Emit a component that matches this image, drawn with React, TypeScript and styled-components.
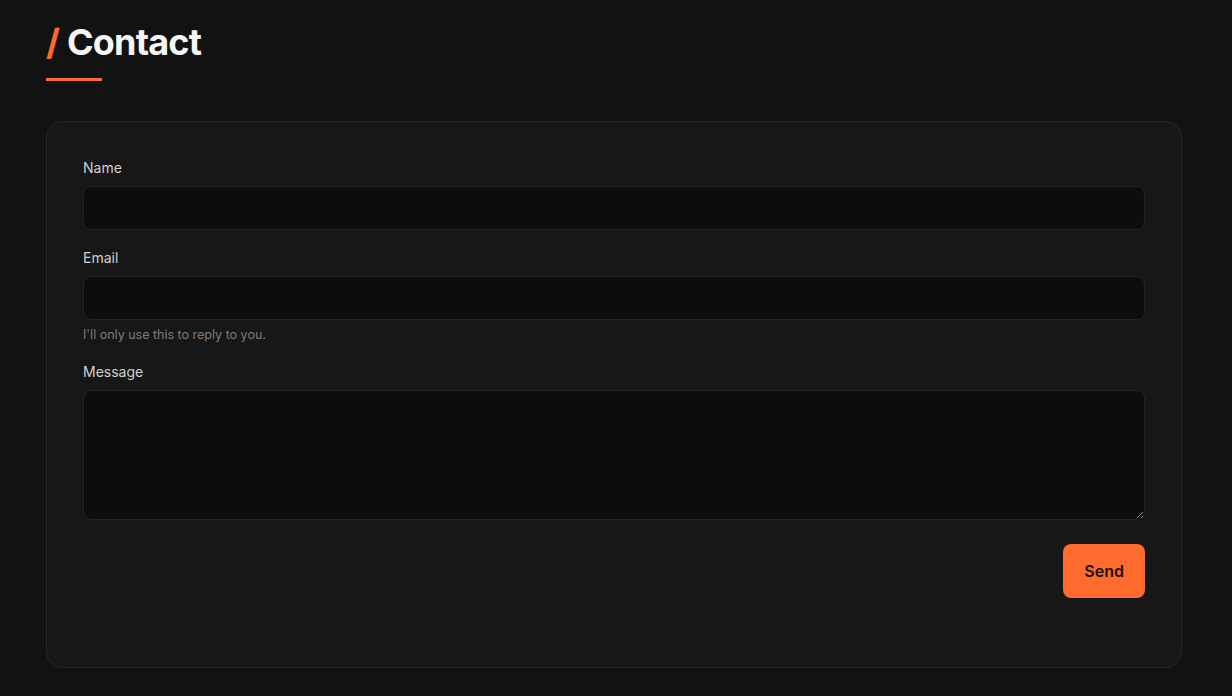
import styled, { createGlobalStyle } from 'styled-components'

const GlobalStyle = createGlobalStyle`
    * {
        box-sizing: border-box;
    }
    body {
        margin: 0;
        background-color: #121212;
        font-family: Inter, "Noto Sans", sans-serif;
        color: #f5f5f5;
    }
`

const Pagina = styled.section`
    min-height: 696px;
    padding: 20px 0 28px 46px;
`

const Titulo = styled.h2`
    margin: 0;
    font-size: 36px;
    line-height: 44px;
    font-weight: 700;
    letter-spacing: -0.8px;
    color: #f5f5f5;
`

const Barra = styled.span`
    color: #ff6b2c;
`

const Subrayado = styled.div`
    width: 56px;
    height: 3px;
    margin-top: 14px;
    background-color: #ff6b2c;
`

const Tarjeta = styled.form`
    width: 1136px;
    margin-top: 40px;
    padding: 36px 36px 69px;
    background-color: #171717;
    border: 1px solid #262626;
    border-radius: 16px;
    display: flex;
    flex-direction: column;
    gap: 18px;
`

const Campo = styled.div`
    display: flex;
    flex-direction: column;
`

const Etiqueta = styled.label`
    font-size: 14px;
    line-height: 20px;
    font-weight: 400;
    color: #d0d0d0;
    margin-bottom: 8px;
`

const Entrada = styled.input`
    height: 44px;
    width: 100%;
    padding: 0 14px;
    background-color: #0d0d0d;
    border: 1px solid #242424;
    border-radius: 8px;
    color: #f5f5f5;
    font-family: inherit;
    font-size: 15px;
    outline: none;
`

const AreaTexto = styled.textarea`
    height: 130px;
    width: 100%;
    padding: 12px 14px;
    background-color: #0d0d0d;
    border: 1px solid #242424;
    border-radius: 8px;
    color: #f5f5f5;
    font-family: inherit;
    font-size: 15px;
    resize: vertical;
    outline: none;
    display: block;
`

const Ayuda = styled.p`
    margin: 6px 0 0;
    font-size: 12.5px;
    line-height: 18px;
    color: #7c7c7c;
`

const Acciones = styled.div`
    display: flex;
    justify-content: flex-end;
    margin-top: 6px;
`

const Boton = styled.button`
    height: 54px;
    padding: 0 21px;
    background-color: #ff6b2c;
    color: #141414;
    border: none;
    border-radius: 8px;
    font-family: inherit;
    font-size: 16px;
    font-weight: 600;
    cursor: pointer;
`

function App() {
    return (
        <>
            <GlobalStyle />
            <Pagina>
                <Titulo><Barra>/</Barra> Contact</Titulo>
                <Subrayado />
                <Tarjeta onSubmit={(e) => e.preventDefault()}>
                    <Campo>
                        <Etiqueta htmlFor="name">Name</Etiqueta>
                        <Entrada id="name" type="text" />
                    </Campo>
                    <Campo>
                        <Etiqueta htmlFor="email">Email</Etiqueta>
                        <Entrada id="email" type="email" />
                        <Ayuda>I'll only use this to reply to you.</Ayuda>
                    </Campo>
                    <Campo>
                        <Etiqueta htmlFor="message">Message</Etiqueta>
                        <AreaTexto id="message" />
                    </Campo>
                    <Acciones>
                        <Boton type="submit">Send</Boton>
                    </Acciones>
                </Tarjeta>
            </Pagina>
        </>
    )
}

export default App
